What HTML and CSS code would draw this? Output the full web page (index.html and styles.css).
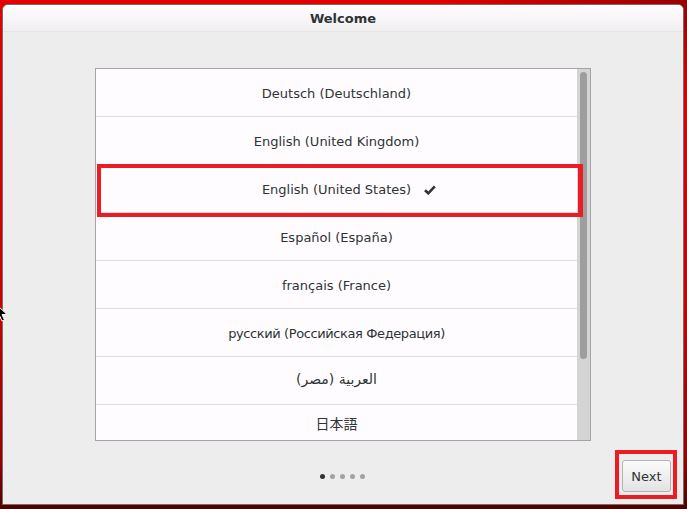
FILE: index.html
```html
<!DOCTYPE html>
<html lang="en">
<head>
    <meta charset="UTF-8">
    <meta name="viewport" content="width=device-width, initial-scale=1.0">
    <title>Welcome</title>
    <link rel="stylesheet" href="styles.css">
</head>
<body>

    <div class="window">
        <header class="titlebar">Welcome</header>

        <main class="content">
            <div class="list-box">
                <ul class="lang-list">
                    <li class="lang">Deutsch (Deutschland)</li>
                    <li class="lang">English (United Kingdom)</li>
                    <li class="lang">
                        <span class="lang-name">English (United States)
                            <svg class="check" width="12" height="10" viewBox="0 0 12 10">
                                <path d="M1 5.2 L4.3 8.3 L10.8 1.3" fill="none" stroke="#2e3436" stroke-width="2.6"/>
                            </svg>
                        </span>
                    </li>
                    <li class="lang">Español (España)</li>
                    <li class="lang">français (France)</li>
                    <li class="lang cyr">русский (Российская Федерация)</li>
                    <li class="lang arabic"><span dir="rtl">العربية (مصر)</span></li>
                    <li class="lang cjk">日本語</li>
                </ul>
                <div class="scrollbar">
                    <div class="thumb"></div>
                </div>
                <!-- red annotation box over the selected row -->
                <div class="mark mark-row"></div>
            </div>

            <div class="footer">
                <div class="dots">
                    <span class="dot active"></span>
                    <span class="dot"></span>
                    <span class="dot"></span>
                    <span class="dot"></span>
                    <span class="dot"></span>
                </div>
                <div class="next-wrap">
                    <button class="next-button">Next</button>
                    <div class="mark mark-next"></div>
                </div>
            </div>
        </main>
    </div>

    <svg class="pointer" width="14" height="20" viewBox="0 0 14 20">
        <path d="M1 1 L1 16 L4.5 12.5 L7 18 L9.5 17 L7 11.5 L12 11.5 Z" fill="#000" stroke="#fff" stroke-width="1"/>
    </svg>

</body>
</html>
```

FILE: styles.css
```css
body {
    margin: 0;
    padding: 0;
    height: 509px;
    overflow: hidden;
    font-family: 'DejaVu Sans', 'Noto Sans CJK JP', sans-serif;
    background:
        linear-gradient(200deg, rgba(90, 0, 0, 0.55) 0%, rgba(90, 0, 0, 0) 12%),
        linear-gradient(180deg, #e20000 0%, #cc0000 60%, #9a0000 90%, #4e0000 100%);
    position: relative;
}

.window {
    margin: 4px 3px 0 2px;
    height: 501px;
    box-sizing: border-box;
    border: 1px solid #7a6a6a;
    border-radius: 6px 6px 0 0;
    background-color: #ededed;
    display: flex;
    flex-direction: column;
    overflow: hidden;
}

.titlebar {
    height: 26px;
    flex-shrink: 0;
    background: linear-gradient(#fefcfe, #f1f0f1);
    border-bottom: 1px solid #e6e5e6;
    color: #2e3436;
    font-weight: bold;
    font-size: 13px;
    text-align: center;
    line-height: 28px;
}

.content {
    flex: 1;
    display: flex;
    flex-direction: column;
    padding: 36px 12px 0 12px;
}

.list-box {
    position: relative;
    width: 496px;
    height: 373px;
    box-sizing: border-box;
    margin: 0 auto;
    border: 1px solid #a4a4a4;
    background-color: #d4d4d4;
    display: flex;
}

.lang-list {
    list-style: none;
    margin: 0;
    padding: 0;
    flex: 1;
    overflow: hidden;
    background-color: #fefcfe;
}

.lang {
    height: 48px;
    box-sizing: border-box;
    padding-top: 2px;
    border-bottom: 1px solid #e0dfe0;
    display: flex;
    align-items: center;
    justify-content: center;
    color: #2e3436;
    font-size: 13px;
}

.cyr {
    letter-spacing: -0.4px;
}

.arabic {
    font-size: 14px;
    padding-top: 0;
    padding-bottom: 4px;
}

.cjk {
    font-size: 14px;
    padding-top: 0;
    padding-bottom: 12px;
}

.lang-name {
    position: relative;
}

.check {
    position: absolute;
    left: calc(100% + 13px);
    top: 3px;
}

.scrollbar {
    width: 13px;
    padding: 3px 3px 0 3px;
    box-sizing: border-box;
}

.thumb {
    height: 287px;
    background-color: #9d9f9c;
    border-radius: 4px;
}

.mark {
    position: absolute;
    border: 4px solid #ec1c24;
    box-sizing: border-box;
}

.mark-row {
    left: 1px;
    top: 95px;
    width: 486px;
    height: 53px;
    border-width: 4px 5px 4px 4px;
}

.footer {
    margin-top: 19px;
    display: grid;
    grid-template-columns: 1fr auto 1fr;
    align-items: center;
}

.dots {
    grid-column: 2;
    display: flex;
    gap: 5px;
    margin-left: -2px;
}

.dot {
    width: 5px;
    height: 5px;
    border-radius: 50%;
    background-color: #a2a2a2;
}

.dot.active {
    background-color: #2e3436;
}

.next-wrap {
    grid-column: 3;
    justify-self: end;
    position: relative;
}

.next-button {
    display: block;
    width: 49px;
    height: 32px;
    font-family: 'DejaVu Sans', sans-serif;
    font-size: 13px;
    color: #2e3436;
    background: linear-gradient(#fbfbfb, #e3e3e3);
    border: 1px solid #b3b3b3;
    border-radius: 3px;
    padding: 0;
}

.mark-next {
    left: -7px;
    top: -10px;
    width: 62px;
    height: 49px;
}

.pointer {
    position: absolute;
    left: -5px;
    top: 303px;
}
```
